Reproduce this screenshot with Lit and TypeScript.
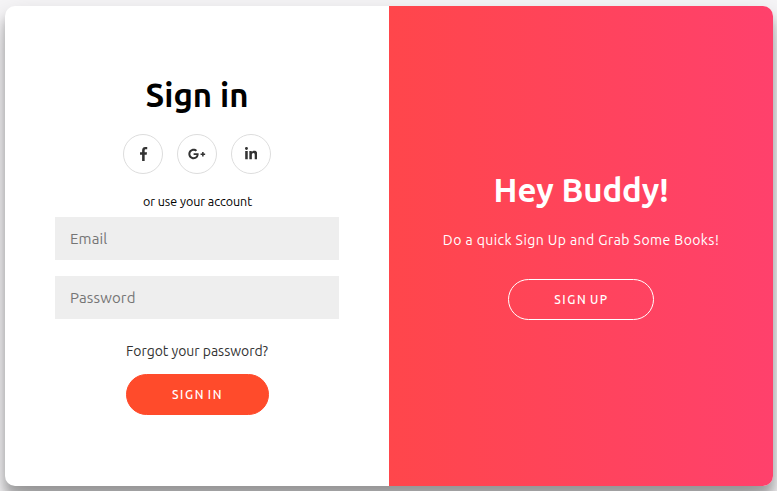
import { LitElement, html, css, svg } from "lit";
import { customElement, property } from "lit/decorators.js";

const ICONS: Record<string, { width: number; path: string }> = {
  facebook: {
    width: 264,
    path: "M76.7 512V283H0v-91h76.7v-71.7C76.7 42.4 124.3 0 193.8 0c33.3 0 61.9 2.5 70.2 3.6V85h-48.2c-37.8 0-45.1 18-45.1 44.3V192H256l-11.7 91h-73.6v229",
  },
  google: {
    width: 640,
    path: "M386.061 228.496c1.834 9.692 3.143 19.384 3.143 31.956C389.204 370.205 315.599 448 204.8 448c-106.084 0-192-85.915-192-192s85.916-192 192-192c51.864 0 95.083 18.859 128.611 50.292l-52.126 50.03c-14.145-13.621-39.028-29.599-76.485-29.599-65.484 0-118.92 54.221-118.92 121.277 0 67.056 53.436 121.277 118.92 121.277 75.961 0 104.513-54.745 108.965-82.773H204.8v-66.009h181.261zm185.406 6.437V179.2h-56.001v55.733h-55.733v56.001h55.733v55.733h56.001v-55.733H627.2v-56.001h-55.733z",
  },
  linkedin: {
    width: 448,
    path: "M100.28 448H7.4V148.9h92.88zM53.79 108.1C24.09 108.1 0 83.5 0 53.8a53.79 53.79 0 0 1 107.58 0c0 29.7-24.1 54.3-53.79 54.3zM447.9 448h-92.68V302.4c0-34.7-.7-79.2-48.29-79.2-48.29 0-55.69 37.7-55.69 76.7V448h-92.78V148.9h89.08v40.8h1.3c12.4-23.5 42.69-48.3 88.88-48.3 95.08 0 112.28 62.3 112.28 143.7V448z",
  },
};

@customElement("social-link")
export class SocialLink extends LitElement {
  @property() name = "facebook";

  static styles = css`
    :host { display: block; }
    .link {
      box-sizing: border-box;
      width: 40px;
      height: 40px;
      border: 1px solid #ddd;
      border-radius: 50%;
      display: flex;
      align-items: center;
      justify-content: center;
      color: #333;
    }
    .icon { display: block; height: 14px; fill: currentColor; }
    .facebook { margin-left: 2px; }
  `;

  render() {
    const icon = ICONS[this.name];
    return html`<a class="link" aria-label=${this.name}>
      <svg class="icon ${this.name}" viewBox="0 0 ${icon.width} 512" width=${(icon.width * 14) / 512} height="14">
        ${svg`<path d=${icon.path}></path>`}
      </svg>
    </a>`;
  }
}

@customElement("app-root")
export class AppRoot extends LitElement {
  static styles = css`
    :host {
      display: block;
      box-sizing: border-box;
      height: 491px;
      padding: 6px 4px 5px 5px;
      overflow: hidden;
      background: #f6f5f7;
      font-family: Ubuntu, "Noto Sans", sans-serif;
    }
    .card {
      display: grid;
      grid-template-columns: 1fr 1fr;
      height: 480px;
      border-radius: 10px;
      overflow: hidden;
      background: #fff;
      box-shadow: 0 14px 28px rgba(0, 0, 0, 0.25), 0 10px 10px rgba(0, 0, 0, 0.22);
    }
    .panel {
      display: flex;
      flex-direction: column;
      align-items: center;
      white-space: nowrap;
    }
    .form { padding: 68px 50px 0; }
    .invite {
      padding-top: 163px;
      color: #fff;
      background: linear-gradient(to right, #ff464b, #ff416c);
    }
    h1 {
      margin: 0;
      font-size: 33px;
      font-weight: 600;
      line-height: 42px;
    }
    .signin-title { letter-spacing: 0; color: #000; }
    .invite-title { letter-spacing: -0.1px; }
    .social { display: flex; gap: 14px; margin-top: 18px; }
    .hint {
      margin-top: 19px;
      padding-left: 1px;
      font-size: 12.5px;
      line-height: 16px;
      letter-spacing: -0.03px;
      color: #000;
    }
    input {
      box-sizing: border-box;
      width: 284px;
      height: 43px;
      margin: 0;
      padding: 0 15px;
      border: none;
      border-radius: 0;
      background: #eee;
      font: 400 15px/20px Ubuntu, "Noto Sans", sans-serif;
      letter-spacing: 0.15px;
    }
    input::placeholder { color: #757575; opacity: 1; }
    .email { margin-top: 8px; }
    .password { margin-top: 16px; }
    .forgot {
      margin-top: 22px;
      font-size: 14px;
      line-height: 20px;
      letter-spacing: -0.03px;
      color: #333;
    }
    button {
      box-sizing: border-box;
      height: 41px;
      padding: 0 0 0 1px;
      border-radius: 20.5px;
      border: 1px solid #ff4b2b;
      background: #ff4b2b;
      color: #fff;
      font: 500 12px/16px Ubuntu, "Noto Sans", sans-serif;
      letter-spacing: 1.6px;
      word-spacing: -1.7px;
      text-transform: uppercase;
    }
    .signin { width: 143px; margin-top: 13px; }
    .signup { width: 146px; margin-top: 29px; border-color: #fff; background: transparent; }
    .pitch {
      margin-top: 19px;
      font-size: 14px;
      font-weight: 400;
      line-height: 20px;
      letter-spacing: 0.43px;
    }
  `;

  render() {
    return html`
      <main class="card">
        <section class="panel form">
          <h1 class="signin-title">Sign in</h1>
          <div class="social">
            <social-link name="facebook"></social-link>
            <social-link name="google"></social-link>
            <social-link name="linkedin"></social-link>
          </div>
          <span class="hint">or use your account</span>
          <input class="email" type="email" placeholder="Email" />
          <input class="password" type="password" placeholder="Password" />
          <a class="forgot">Forgot your password?</a>
          <button class="signin">Sign In</button>
        </section>
        <section class="panel invite">
          <h1 class="invite-title">Hey Buddy!</h1>
          <span class="pitch">Do a quick Sign Up and Grab Some Books!</span>
          <button class="signup">Sign Up</button>
        </section>
      </main>
    `;
  }
}
